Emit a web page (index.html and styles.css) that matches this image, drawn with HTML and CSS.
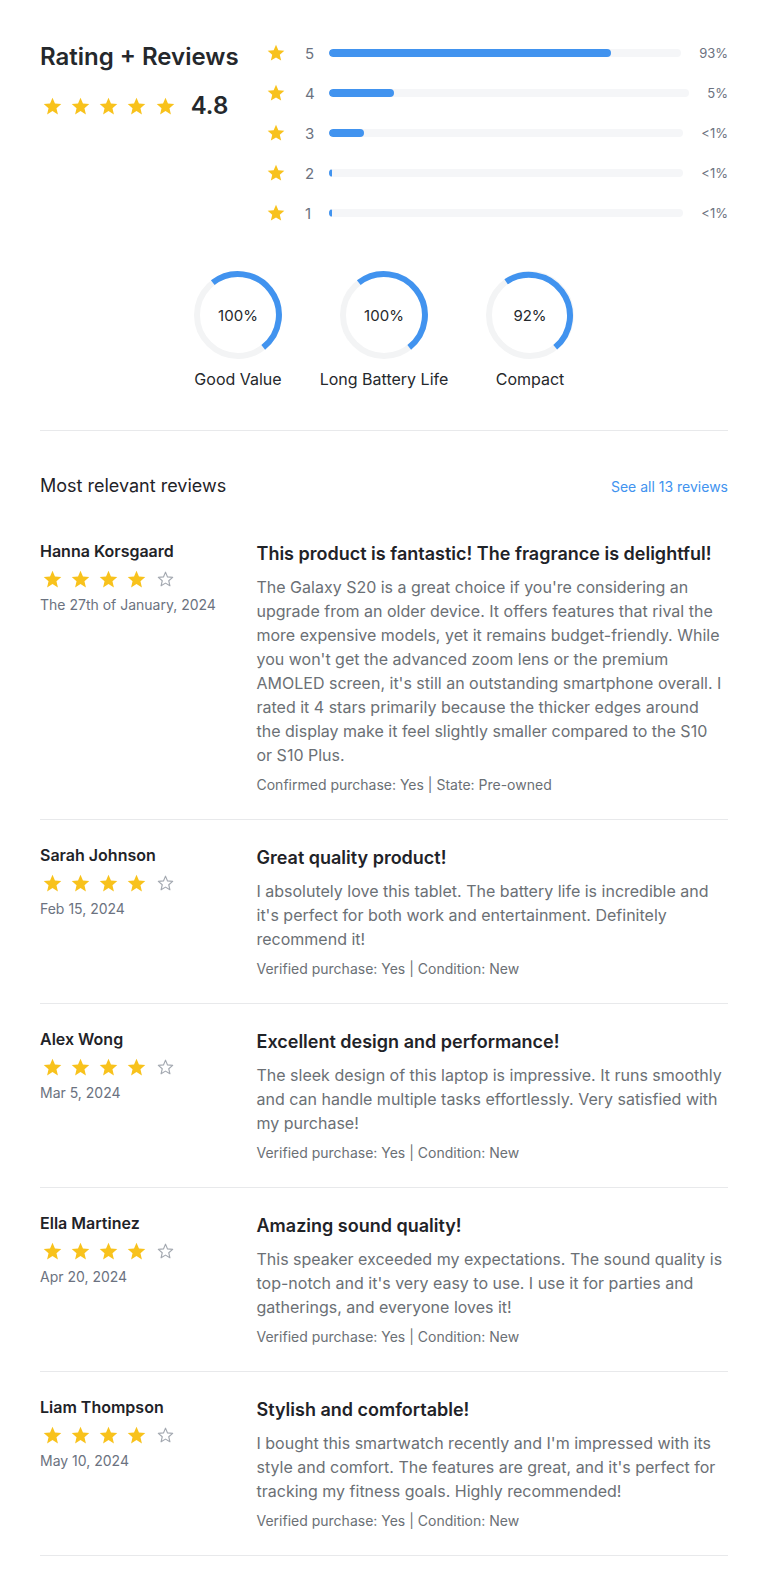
FILE: index.html
```html
<!DOCTYPE html>
<html lang="en">
<head>
<meta charset="utf-8">
<title>Rating + Reviews</title>
<link rel="stylesheet" href="styles.css">
</head>
<body>
<svg width="0" height="0" class="defs" aria-hidden="true">
  <defs>
    <symbol id="star" viewBox="0 0 24 24"><path d="M12 17.27L18.18 21l-1.64-7.03L22 9.24l-7.19-.61L12 2 9.19 8.63 2 9.24l5.46 4.73L5.82 21z"/></symbol>
    <symbol id="star-o" viewBox="0 0 24 24"><path d="M12 3.6l2.3 5.45 5.9.5-4.48 3.88 1.34 5.77L12 16.14l-5.06 3.06 1.34-5.77L3.8 9.55l5.9-.5z" fill="none" stroke="currentColor" stroke-width="1.3" stroke-linejoin="round"/></symbol>
  </defs>
</svg>
<div class="page">
  <section class="summary">
    <div class="summary-left">
      <h1 class="title">Rating + Reviews</h1>
      <div class="avg">
        <div class="stars">
          <svg class="star"><use href="#star"/></svg>
          <svg class="star"><use href="#star"/></svg>
          <svg class="star"><use href="#star"/></svg>
          <svg class="star"><use href="#star"/></svg>
          <svg class="star"><use href="#star"/></svg>
        </div>
        <span class="avg-num">4.8</span>
      </div>
    </div>
    <div class="bars">
      <div class="bar-row">
        <svg class="bar-star"><use href="#star"/></svg>
        <span class="bar-num">5</span>
        <div class="track"><div class="fill" style="width:80%"></div></div>
        <span class="bar-pct">93%</span>
      </div>
      <div class="bar-row">
        <svg class="bar-star"><use href="#star"/></svg>
        <span class="bar-num">4</span>
        <div class="track"><div class="fill" style="width:18%"></div></div>
        <span class="bar-pct">5%</span>
      </div>
      <div class="bar-row">
        <svg class="bar-star"><use href="#star"/></svg>
        <span class="bar-num">3</span>
        <div class="track"><div class="fill" style="width:10%"></div></div>
        <span class="bar-pct">&lt;1%</span>
      </div>
      <div class="bar-row">
        <svg class="bar-star"><use href="#star"/></svg>
        <span class="bar-num">2</span>
        <div class="track"><div class="fill fill-min" style="width:0.5%"></div></div>
        <span class="bar-pct">&lt;1%</span>
      </div>
      <div class="bar-row">
        <svg class="bar-star"><use href="#star"/></svg>
        <span class="bar-num">1</span>
        <div class="track"><div class="fill fill-min" style="width:0.5%"></div></div>
        <span class="bar-pct">&lt;1%</span>
      </div>
    </div>
  </section>

  <section class="donuts">
    <div class="donut">
      <div class="ring">
        <svg viewBox="0 0 88 88" width="88" height="88"><circle cx="44" cy="44" r="41" class="ring-track"/><path d="M18.76 11.69 A41 41 0 0 1 69.24 76.31" class="ring-arc"/></svg>
        <span class="ring-val">100%</span>
      </div>
      <div class="donut-label">Good Value</div>
    </div>
    <div class="donut">
      <div class="ring">
        <svg viewBox="0 0 88 88" width="88" height="88"><circle cx="44" cy="44" r="41" class="ring-track"/><path d="M18.76 11.69 A41 41 0 0 1 69.24 76.31" class="ring-arc"/></svg>
        <span class="ring-val">100%</span>
      </div>
      <div class="donut-label">Long Battery Life</div>
    </div>
    <div class="donut">
      <div class="ring">
        <svg viewBox="0 0 88 88" width="88" height="88"><circle cx="44" cy="44" r="41" class="ring-track"/><path d="M20.1 10.8 A41 41 0 0 1 69.24 76.31" class="ring-arc"/></svg>
        <span class="ring-val">92%</span>
      </div>
      <div class="donut-label">Compact</div>
    </div>
  </section>

  <section class="reviews">
    <div class="reviews-head">
      <h2 class="reviews-title">Most relevant reviews</h2>
      <a class="see-all" href="#">See all 13 reviews</a>
    </div>

    <article class="review">
      <div class="review-left">
        <div class="reviewer">Hanna Korsgaard</div>
        <div class="stars stars-sm">
          <svg class="star"><use href="#star"/></svg>
          <svg class="star"><use href="#star"/></svg>
          <svg class="star"><use href="#star"/></svg>
          <svg class="star"><use href="#star"/></svg>
          <svg class="star star-empty"><use href="#star-o"/></svg>
        </div>
        <div class="review-date">The 27th of January, 2024</div>
      </div>
      <div class="review-right">
        <h3 class="review-title">This product is fantastic! The fragrance is delightful!</h3>
        <p class="review-body">The Galaxy S20 is a great choice if you're considering an upgrade from an older device. It offers features that rival the more expensive models, yet it remains budget-friendly. While you won't get the advanced zoom lens or the premium AMOLED screen, it's still an outstanding smartphone overall. I rated it 4 stars primarily because the thicker edges around the display make it feel slightly smaller compared to the S10 or S10 Plus.</p>
        <div class="review-meta">Confirmed purchase: Yes | State: Pre-owned</div>
      </div>
    </article>

    <article class="review">
      <div class="review-left">
        <div class="reviewer">Sarah Johnson</div>
        <div class="stars stars-sm">
          <svg class="star"><use href="#star"/></svg>
          <svg class="star"><use href="#star"/></svg>
          <svg class="star"><use href="#star"/></svg>
          <svg class="star"><use href="#star"/></svg>
          <svg class="star star-empty"><use href="#star-o"/></svg>
        </div>
        <div class="review-date">Feb 15, 2024</div>
      </div>
      <div class="review-right">
        <h3 class="review-title">Great quality product!</h3>
        <p class="review-body">I absolutely love this tablet. The battery life is incredible and it's perfect for both work and entertainment. Definitely recommend it!</p>
        <div class="review-meta">Verified purchase: Yes | Condition: New</div>
      </div>
    </article>

    <article class="review">
      <div class="review-left">
        <div class="reviewer">Alex Wong</div>
        <div class="stars stars-sm">
          <svg class="star"><use href="#star"/></svg>
          <svg class="star"><use href="#star"/></svg>
          <svg class="star"><use href="#star"/></svg>
          <svg class="star"><use href="#star"/></svg>
          <svg class="star star-empty"><use href="#star-o"/></svg>
        </div>
        <div class="review-date">Mar 5, 2024</div>
      </div>
      <div class="review-right">
        <h3 class="review-title">Excellent design and performance!</h3>
        <p class="review-body">The sleek design of this laptop is impressive. It runs smoothly and can handle multiple tasks effortlessly. Very satisfied with my purchase!</p>
        <div class="review-meta">Verified purchase: Yes | Condition: New</div>
      </div>
    </article>

    <article class="review">
      <div class="review-left">
        <div class="reviewer">Ella Martinez</div>
        <div class="stars stars-sm">
          <svg class="star"><use href="#star"/></svg>
          <svg class="star"><use href="#star"/></svg>
          <svg class="star"><use href="#star"/></svg>
          <svg class="star"><use href="#star"/></svg>
          <svg class="star star-empty"><use href="#star-o"/></svg>
        </div>
        <div class="review-date">Apr 20, 2024</div>
      </div>
      <div class="review-right">
        <h3 class="review-title">Amazing sound quality!</h3>
        <p class="review-body">This speaker exceeded my expectations. The sound quality is top-notch and it's very easy to use. I use it for parties and gatherings, and everyone loves it!</p>
        <div class="review-meta">Verified purchase: Yes | Condition: New</div>
      </div>
    </article>

    <article class="review">
      <div class="review-left">
        <div class="reviewer">Liam Thompson</div>
        <div class="stars stars-sm">
          <svg class="star"><use href="#star"/></svg>
          <svg class="star"><use href="#star"/></svg>
          <svg class="star"><use href="#star"/></svg>
          <svg class="star"><use href="#star"/></svg>
          <svg class="star star-empty"><use href="#star-o"/></svg>
        </div>
        <div class="review-date">May 10, 2024</div>
      </div>
      <div class="review-right">
        <h3 class="review-title">Stylish and comfortable!</h3>
        <p class="review-body">I bought this smartwatch recently and I'm impressed with its style and comfort. The features are great, and it's perfect for tracking my fitness goals. Highly recommended!</p>
        <div class="review-meta">Verified purchase: Yes | Condition: New</div>
      </div>
    </article>
  </section>
</div>
</body>
</html>
```

FILE: styles.css
```css
* { box-sizing: border-box; }

html, body {
  margin: 0;
  padding: 0;
  background: #ffffff;
}

body {
  font-family: Inter, "Noto Sans", "Liberation Sans", sans-serif;
  color: #1f2328;
  -webkit-font-smoothing: antialiased;
}

.defs {
  position: absolute;
  width: 0;
  height: 0;
  overflow: hidden;
}

.page {
  padding: 33px 40px 40px 40px;
}

/* Summary */
.summary {
  display: flex;
}

.summary-left {
  width: 226px;
  flex: none;
  padding-top: 9px;
}

.title {
  margin: 0;
  font-size: 24px;
  line-height: 30px;
  font-weight: 600;
  color: #25282c;
}

.avg {
  display: flex;
  align-items: center;
  margin-top: 19px;
}

.stars {
  display: flex;
  gap: 7.3px;
  margin-left: 1.5px;
}

.star {
  width: 21px;
  height: 21px;
  fill: #f8c21c;
  color: #a3a8b0;
  flex: none;
}

.star-empty {
  fill: none;
}

.avg-num {
  margin-left: 15px;
  font-size: 24px;
  line-height: 30px;
  font-weight: 600;
  color: #25282c;
}

.bars {
  flex: 1;
  min-width: 0;
}

.bar-row {
  display: flex;
  align-items: center;
  height: 40px;
}

.bar-star {
  width: 20px;
  height: 20px;
  fill: #f8c21c;
  flex: none;
}

.bar-num {
  width: 24px;
  margin-left: 19px;
  font-size: 15px;
  color: #6b7280;
  flex: none;
}

.track {
  flex: 1;
  height: 8px;
  border-radius: 4px;
  background: #f5f6f8;
  overflow: hidden;
}

.fill {
  height: 100%;
  border-radius: 4px;
  background: #4193ef;
}

.fill-min {
  min-width: 3px;
}

.bar-pct {
  margin-left: 18px;
  font-size: 13px;
  color: #6b7280;
  flex: none;
}

/* Donuts */
.donuts {
  display: flex;
  justify-content: center;
  margin-top: 38px;
  padding-bottom: 41px;
  border-bottom: 1px solid #e8e9eb;
}

.donut {
  width: 146px;
  display: flex;
  flex-direction: column;
  align-items: center;
}

.ring {
  position: relative;
  width: 88px;
  height: 88px;
}

.ring svg {
  display: block;
}

.ring-track {
  fill: none;
  stroke: #f3f4f5;
  stroke-width: 6;
}

.ring-arc {
  fill: none;
  stroke: #4193ef;
  stroke-width: 6;
}

.ring-val {
  position: absolute;
  inset: 0;
  display: flex;
  align-items: center;
  justify-content: center;
  font-size: 15px;
  color: #25282c;
}

.donut-label {
  margin-top: 10px;
  font-size: 16px;
  line-height: 20px;
  color: #25282c;
  white-space: nowrap;
}

/* Reviews */
.reviews-head {
  display: flex;
  justify-content: space-between;
  align-items: center;
  padding-top: 43px;
}

.reviews-title {
  margin: 0;
  font-size: 18px;
  line-height: 24px;
  font-weight: 400;
  color: #1f2328;
}

.see-all {
  font-size: 14px;
  color: #4193ef;
  text-decoration: none;
}

.review {
  display: flex;
  padding: 26.6px 0 23.5px;
  border-bottom: 1px solid #e8e9eb;
}

.reviews-head + .review {
  margin-top: 17.7px;
}

.review-left {
  width: 216.5px;
  flex: none;
}

.reviewer {
  font-size: 16px;
  line-height: 18px;
  font-weight: 600;
  color: #1f2328;
}

.stars-sm {
  margin-top: 8.4px;
}

.review-date {
  margin-top: 6.3px;
  font-size: 14px;
  line-height: 18px;
  color: #6b7280;
}

.review-right {
  flex: 1;
  min-width: 0;
  padding-right: 4px;
}

.review-title {
  margin: 0;
  font-size: 18px;
  line-height: 24px;
  font-weight: 600;
  color: #1f2328;
}

.review-body {
  margin: 8.4px 0 0;
  font-size: 16px;
  line-height: 24px;
  color: #6b7075;
}

.review-meta {
  margin-top: 8.5px;
  font-size: 14px;
  line-height: 20px;
  color: #6b7075;
}
```
